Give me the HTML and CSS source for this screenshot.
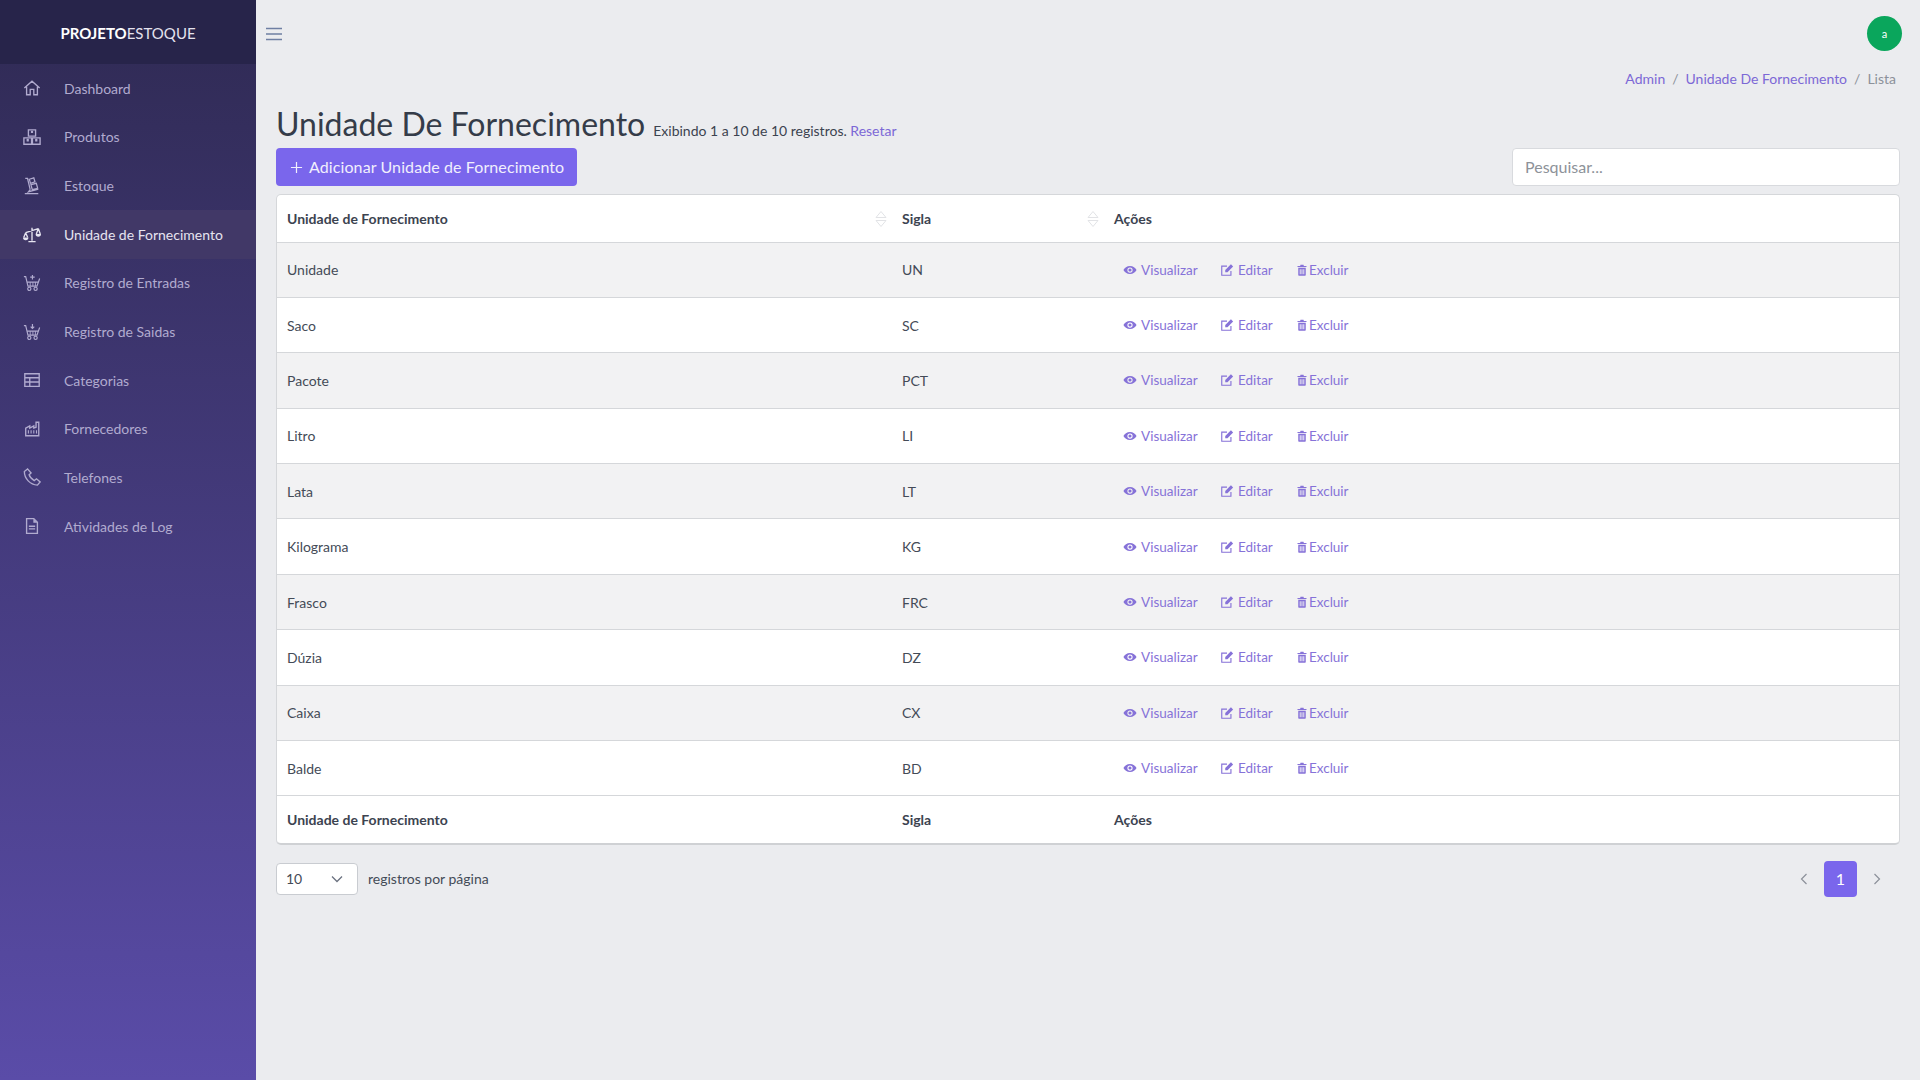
FILE: index.html
```html
<!DOCTYPE html>
<html>
<head>
	<meta charset="utf-8">
	<title>Unidade De Fornecimento</title>
	<link rel="stylesheet" href="styles.css">
</head>
<body>
<svg class="defs" width="0" height="0">
	<symbol id="i-eye" viewBox="0 0 16 16"><path fill="currentColor" fill-rule="evenodd" d="M8 3.500C4.500 3.500 1.700 5.500.5 8c1.200 2.500 4 4.500 7.500 4.500s6.300-2 7.500-4.500C14.300 5.500 11.500 3.500 8 3.500zm0 7.500A3 3 0 1 1 8 5a3 3 0 0 1 0 6zM8 6.200a1.800 1.800 0 1 0 0 3.600 1.800 1.800 0 0 0 0-3.600z"/></symbol>
	<symbol id="i-edit" viewBox="0 0 16 16"><path fill="none" stroke="currentColor" stroke-width="1.300" d="M12.500 9v5H2V3.500h6"/><path fill="currentColor" d="M6 8 12.500 1.500 15 4 8.500 10.500H6z"/></symbol>
	<symbol id="i-trash" viewBox="0 0 16 16"><path fill="currentColor" fill-rule="evenodd" d="M6 1h4l.5 1.500H14V4H2V2.500h3.500zM3 5h10v9.500a1 1 0 0 1-1 1H4a1 1 0 0 1-1-1zm2 2v6.500h1.200V7zm2.400 0v6.500h1.200V7zm2.400 0v6.500H11V7z"/></symbol>
	<symbol id="i-cart" viewBox="0 0 20 20"><path fill="none" stroke="currentColor" stroke-width="1.300" d="M1 3h2l2.500 10.500h10L18.500 5M4.500 9h12.500"/><circle cx="7" cy="16.500" r="1.800" fill="none" stroke="currentColor" stroke-width="1.300"/><circle cx="14" cy="16.500" r="1.800" fill="none" stroke="currentColor" stroke-width="1.300"/><path fill="none" stroke="currentColor" stroke-width="1" d="M8 9v4.500M11 9v4.500M13.800 9v4.500"/></symbol>
	<symbol id="i-sort" viewBox="0 0 12 18"><path fill="none" stroke="currentColor" d="M6 1.500 11 7.500H1zM1 10.500h10L6 16.500z"/></symbol>
</svg>

<div class="layout">
	<aside class="sidebar">
		<div class="logo"><b>PROJETO</b>ESTOQUE</div>
		<ul class="menu">
			<li><svg class="menuIcon" viewBox="0 0 20 20"><path fill="none" stroke="currentColor" stroke-width="1.500" d="M1.500 10 10 2.500l8.500 7.500M4 8.500V17.500h4v-6h4v6h4V8.500"/></svg>Dashboard</li>
			<li><svg class="menuIcon" viewBox="0 0 20 20"><path fill="none" stroke="currentColor" stroke-width="1.500" d="M6 2h8v7H6zM1 11h8.500v7H1zM10.500 11H19v7h-8.500z"/><path fill="currentColor" d="M8.800 3h2.400v2.500H8.800zM4 12h2.500v3H4zM13.500 12H16v3h-2.500z"/></svg>Produtos</li>
			<li><svg class="menuIcon" viewBox="0 0 20 20"><path fill="none" stroke="currentColor" stroke-width="1.400" d="M2.500 1.500H5L8 14M2 18.500h15M7 2.500l5-1.500 1.300 4.500-5 1.500zM8.800 8.500l6-1.500 1.500 5.500-6 1.500zM8 14l-2 2.500 11-3"/></svg>Estoque</li>
			<li class="active"><svg class="menuIcon" viewBox="0 0 20 20"><path fill="none" stroke="currentColor" stroke-width="1.500" d="M10 3v14.500M6 18.500h8M3 8.500 17 4M3 8.500.8 14M3 8.500 5.200 14M17 4l-2.200 6M17 4l2.200 6"/><path fill="currentColor" d="M0 14h6a3 3 0 0 1-6 0zM14 10h6a3 3 0 0 1-6 0z"/></svg>Unidade de Fornecimento</li>
			<li><svg class="menuIcon" viewBox="0 0 20 20"><use href="#i-cart"/><path fill="none" stroke="currentColor" stroke-width="1.300" d="M10.500 1v5M8 3.500h5"/></svg>Registro de Entradas</li>
			<li><svg class="menuIcon" viewBox="0 0 20 20"><use href="#i-cart"/><path fill="none" stroke="currentColor" stroke-width="1.300" d="M10.500 1v5M8.500 4l2 2 2-2"/></svg>Registro de Saidas</li>
			<li><svg class="menuIcon" viewBox="0 0 20 20"><path fill="none" stroke="currentColor" stroke-width="1.500" d="M2 3h16v14H2zM2 7.500h16M2 12.200h16M7.500 7.500V17"/></svg>Categorias</li>
			<li><svg class="menuIcon" viewBox="0 0 20 20"><path fill="none" stroke="currentColor" stroke-width="1.500" d="M3 17.500V9l4.500-2.500V9L12 6.500V9l2.500-1V2.500H17.500v15z"/><path fill="none" stroke="currentColor" stroke-width="1.200" d="M6 11.500v3.500M9 11.500v3.500M12 11.500v3.500M15 11.500v3.500"/></svg>Fornecedores</li>
			<li><svg class="menuIcon" viewBox="0 0 20 20"><path fill="none" stroke="currentColor" stroke-width="1.500" d="M5 1 1.500 4c0 8 6.500 14.500 14.500 15l3-3.500-4-3.500-2.500 2C10 12.500 7.500 10 6.800 7.500L9 5.500z"/></svg>Telefones</li>
			<li><svg class="menuIcon" viewBox="0 0 20 20"><path fill="none" stroke="currentColor" stroke-width="1.500" d="M4 1.800h8l4 4v12.400H4z"/><path fill="currentColor" d="M11.500 2 16 6.500h-4.500zM6.500 9.500h7V11h-7zM6.500 12.500h7V14h-7z"/></svg>Atividades de Log</li>
		</ul>
	</aside>

	<main class="content">
		<header class="topbar">
			<svg class="burger" viewBox="0 0 16 14"><path fill="none" stroke="currentColor" stroke-width="1.400" d="M0 1.500h16M0 7h16M0 12.500h16"/></svg>
			<div class="avatar">a</div>
		</header>

		<div class="breadcrumb">
			<a>Admin</a><span class="sep">/</span><a>Unidade De Fornecimento</a><span class="sep">/</span><span class="last">Lista</span>
		</div>

		<div class="titleRow">
			<h1>Unidade De Fornecimento</h1>
			<span class="info">Exibindo 1 a 10 de 10 registros. <a>Resetar</a></span>
		</div>

		<div class="toolbar">
			<button class="addBtn"><svg class="plus" viewBox="0 0 14 14"><path fill="none" stroke="currentColor" stroke-width="1.300" d="M7 1v12M1 7h12"/></svg>Adicionar Unidade de Fornecimento</button>
			<input class="search" type="text" placeholder="Pesquisar...">
		</div>

		<div class="tableBox">
			<table class="grid">
				<thead>
					<tr>
						<th class="colName">Unidade de Fornecimento<svg class="sort"><use href="#i-sort"/></svg></th>
						<th class="colSigla">Sigla<svg class="sort"><use href="#i-sort"/></svg></th>
						<th>Ações</th>
					</tr>
				</thead>
				<tbody id="rows"></tbody>
				<tfoot>
					<tr>
						<th>Unidade de Fornecimento</th>
						<th>Sigla</th>
						<th>Ações</th>
					</tr>
				</tfoot>
			</table>
		</div>

		<div class="pager">
			<div class="perPage">
				<div class="select">10<svg class="chev" viewBox="0 0 12 8"><path fill="none" stroke="currentColor" stroke-width="1.300" d="M1 1.500 6 6.500l5-5"/></svg></div>
				<span>registros por página</span>
			</div>
			<div class="pages">
				<svg class="arrow" viewBox="0 0 8 12"><path fill="none" stroke="currentColor" stroke-width="1.200" d="M6.500 1 1.500 6l5 5"/></svg>
				<span class="page">1</span>
				<svg class="arrow" viewBox="0 0 8 12"><path fill="none" stroke="currentColor" stroke-width="1.200" d="M1.500 1l5 5-5 5"/></svg>
			</div>
		</div>
	</main>
</div>

<script src="app.js"></script>
</body>
</html>
```

FILE: styles.css
```css
*{
	padding: 0px;
	margin: 0px;
	box-sizing: border-box;
}
body{
	font-family: Lato, "Noto Sans", sans-serif;
	font-size: 14px;
	background-color: #ebecef;
	color: #3c4350;
	overflow: hidden;
}
.defs{
	position: absolute;
}
.layout{
	display: flex;
	height: 1080px;
}
.sidebar{
	width: 256px;
	flex-shrink: 0;
	background: linear-gradient(180deg, #2f2a53 0%, #5a4ca8 100%);
}
.logo{
	height: 64px;
	line-height: 66px;
	text-align: center;
	font-size: 15px;
	color: #e4e2ee;
	background-color: #27244a;
}
.logo b{
	color: #fff;
}
.menu{
	list-style: none;
}
.menu li{
	display: flex;
	align-items: center;
	height: 48.650px;
	padding-left: 23px;
	font-size: 14px;
	color: #b1abcf;
}
.menu li.active{
	background-color: #413867;
	color: #e6e4f0;
}
.menuIcon{
	width: 18px;
	height: 18px;
	margin-right: 23px;
	flex-shrink: 0;
}
.content{
	flex: 1;
	padding: 0 20px;
	min-width: 0;
}
.topbar{
	display: flex;
	justify-content: space-between;
	align-items: center;
	height: 67px;
	margin-left: -10px;
}
.burger{
	width: 16px;
	height: 14px;
	color: #6f7fa3;
}
.avatar{
	width: 35px;
	height: 35px;
	border-radius: 50%;
	background-color: #0aa65c;
	color: #fff;
	font-size: 11px;
	display: flex;
	align-items: center;
	justify-content: center;
	margin-right: -2px;
}
.breadcrumb{
	display: flex;
	justify-content: flex-end;
	align-items: center;
	height: 22px;
	padding-right: 4px;
	font-size: 14px;
}
.breadcrumb a{
	color: #7c68d6;
}
.sep{
	margin: 0 7px;
	color: #8c919a;
}
.last{
	color: #8c919a;
}
.titleRow{
	display: flex;
	align-items: baseline;
	margin-top: 15px;
	height: 40px;
}
h1{
	font-size: 32px;
	font-weight: 400;
	line-height: 40px;
	color: #353c49;
}
.info{
	margin-left: 8px;
	font-size: 14px;
	color: #3c4350;
}
.info a{
	color: #7c68d6;
}
.toolbar{
	display: flex;
	justify-content: space-between;
	align-items: center;
	margin-top: 4px;
}
.addBtn{
	display: flex;
	align-items: center;
	height: 38px;
	width: 301px;
	padding: 0 0 2px 14px;
	border: none;
	border-radius: 4px;
	background-color: #7a66ec;
	color: #f1effd;
	font-family: inherit;
	font-size: 16px;
	letter-spacing: 0.1px;
	white-space: nowrap;
}
.plus{
	width: 13px;
	height: 13px;
	margin: 2px 6px 0 0;
}
.search{
	width: 388px;
	height: 38px;
	padding: 0 12px 2px;
	border: 1px solid #d8dade;
	border-radius: 4px;
	background-color: #fff;
	font-family: inherit;
	font-size: 16px;
}
.search::placeholder{
	color: #8d9299;
}
.tableBox{
	margin-top: 8px;
	background-color: #fff;
	border: 1px solid #d5d7da;
	border-bottom: 2px solid #cfd1d4;
	border-radius: 5px;
	overflow: hidden;
}
.grid{
	width: 100%;
	border-collapse: collapse;
	table-layout: fixed;
}
.grid th{
	position: relative;
	text-align: left;
	font-weight: 700;
	font-size: 14px;
	padding-left: 10px;
	color: #3c4350;
}
.grid thead tr{
	height: 47px;
}
.grid tfoot tr{
	height: 47px;
}
.colName{
	width: 615px;
}
.colSigla{
	width: 212px;
}
.sort{
	position: absolute;
	right: 5px;
	top: 15px;
	width: 12px;
	height: 18px;
	color: #e2e3e6;
}
.grid td{
	height: 55.400px;
	padding-left: 10px;
	border-top: 1px solid #d5d7da;
	font-size: 14px;
	color: #444b57;
}
.grid tfoot th{
	border-top: 1px solid #d5d7da;
}
.grid tbody tr:nth-child(odd){
	background-color: #f2f2f3;
}
.actions{
	display: flex;
	align-items: center;
	padding-left: 9px;
}
.action{
	display: flex;
	align-items: center;
	color: #8672d8;
	font-size: 13.500px;
}
.action svg{
	width: 14px;
	height: 14px;
	margin-right: 4px;
}
.viewLink{
	width: 97px;
}
.editLink{
	width: 76px;
}
.action.deleteLink svg{
	width: 12px;
	height: 12px;
	margin-right: 1px;
}
.pager{
	display: flex;
	justify-content: space-between;
	align-items: center;
	margin-top: 16px;
}
.perPage{
	display: flex;
	align-items: center;
	color: #444b57;
}
.select{
	display: flex;
	justify-content: space-between;
	align-items: center;
	width: 82px;
	height: 32px;
	padding: 0 14px 0 9px;
	margin-right: 10px;
	background-color: #fff;
	border: 1px solid #c9ccd1;
	border-radius: 4px;
}
.chev{
	width: 12px;
	height: 8px;
	color: #6b7280;
}
.pages{
	display: flex;
	align-items: center;
	gap: 16px;
	padding-right: 19px;
}
.arrow{
	width: 8px;
	height: 12px;
	color: #8c919a;
}
.page{
	width: 33px;
	height: 36px;
	line-height: 36px;
	text-align: center;
	border-radius: 4px;
	background-color: #7a66ec;
	color: #fff;
	font-size: 16px;
}
```

FILE: app.js
```js
let data=[
	["Unidade","UN"],["Saco","SC"],["Pacote","PCT"],["Litro","LI"],["Lata","LT"],
	["Kilograma","KG"],["Frasco","FRC"],["Dúzia","DZ"],["Caixa","CX"],["Balde","BD"]
];
let rows=document.getElementById('rows');
data.forEach((item)=>{
	let tr=document.createElement('tr');
	tr.innerHTML='<td>'+item[0]+'</td><td>'+item[1]+'</td><td><div class="actions">'
		+'<a class="action viewLink"><svg><use href="#i-eye"/></svg>Visualizar</a>'
		+'<a class="action editLink"><svg><use href="#i-edit"/></svg>Editar</a>'
		+'<a class="action deleteLink"><svg><use href="#i-trash"/></svg>Excluir</a>'
		+'</div></td>';
	rows.appendChild(tr);
});
```
